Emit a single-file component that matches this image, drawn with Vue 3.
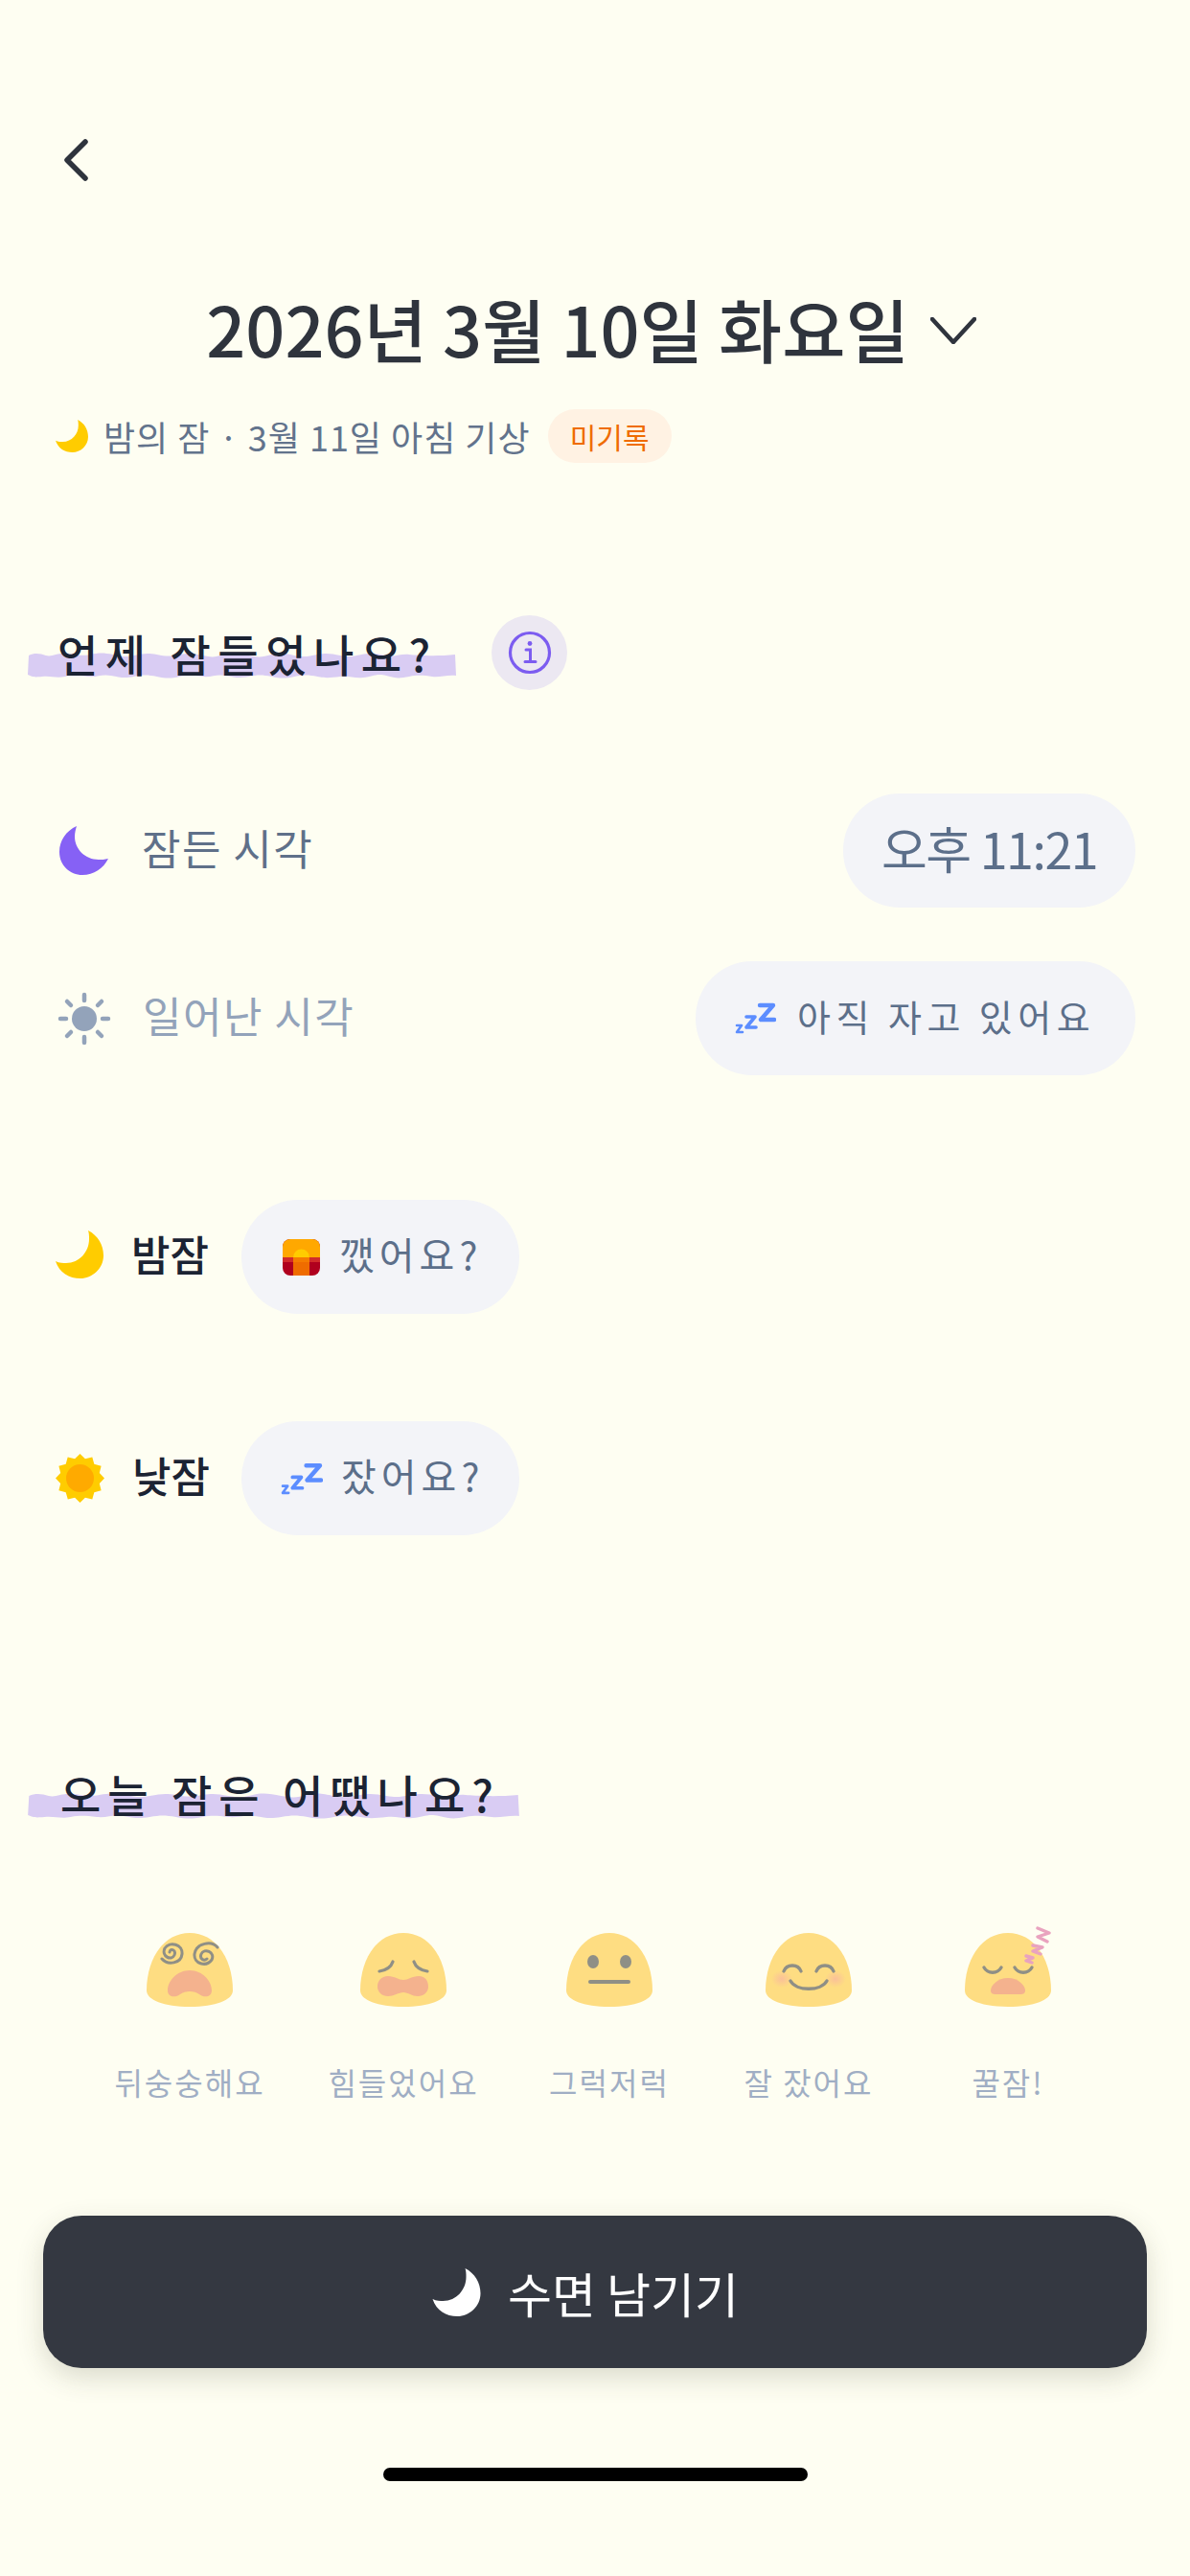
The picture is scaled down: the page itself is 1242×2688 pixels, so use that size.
<script setup>
const qualities = [
  { key: "dizzy", label: "뒤숭숭해요" },
  { key: "tired", label: "힘들었어요" },
  { key: "soso", label: "그럭저럭" },
  { key: "good", label: "잘 잤어요" },
  { key: "sweet", label: "꿀잠!" },
];

// 12 point sun outline
const sunPoints = Array.from({ length: 24 }, (_, i) => {
  const r = i % 2 === 0 ? 25.5 : 21;
  const a = (Math.PI / 12) * i - Math.PI / 2;
  return `${(25.5 + r * Math.cos(a)).toFixed(1)},${(25.5 + r * Math.sin(a)).toFixed(1)}`;
}).join(" ");

const wave = "M2 3C8 0 14 1 20 3S32 0 42 1S56 4 66 2S80 0 90 2S102 5 112 3S126 0 136 2S150 4 160 2S174 1 184 3S196 5 206 2S222 1 232 3S246 5 256 2S270 1 280 3S294 4 304 2S318 1 328 3S340 4 350 2S366 1 376 3S390 1 400 2S430 4 448 2L449 24C440 23 432 26 424 25S410 23 400 25S386 27 376 24S362 25 352 26S338 24 328 25S314 27 304 25S290 23 280 25S266 27 256 25S242 23 232 25S218 26 208 24S194 26 184 25S170 23 160 25S146 27 136 25S122 23 112 25S98 26 88 24S74 26 64 25S50 23 40 25S26 24 16 25S6 25 1 23Z";
</script>

<template>
  <div class="page">
    <div class="back">
      <svg width="30" height="44" viewBox="0 0 30 44" fill="none">
        <path d="M25 3L6 22L25 41" stroke="#2f343d" stroke-width="5.5" stroke-linecap="round" stroke-linejoin="round" />
      </svg>
    </div>

    <div class="date-row">
      <span class="date">2026년 3월 10일 화요일</span>
      <svg width="48" height="28" viewBox="0 0 48 28" fill="none">
        <path d="M2 2L24 26L46 2" stroke="#2f343d" stroke-width="4.5" stroke-linecap="round" stroke-linejoin="round" />
      </svg>
    </div>

    <div class="sub-row">
      <svg class="moon" width="34" height="34" viewBox="0 0 50 50">
        <path fill="#ffcc00" d="M34 0C44 5 50 15 50 26C50 40 38 50 26 50C14 50 4 44 0 32C4 34 8 34 11 34C25 34 35 22 35 9C35 6 35 3 34 0Z" />
      </svg>
      <span class="sub-text">밤의 잠 · 3월 11일 아침 기상</span>
      <span class="badge">미기록</span>
    </div>

    <div class="section-head">
      <div class="marker">
        <svg class="wave" viewBox="0 0 450 27" preserveAspectRatio="none">
          <path fill="#d9ccf3" :d="wave" />
        </svg>
        <span class="marker-text first">언제 잠들었나요?</span>
      </div>
      <div class="info">
        <svg width="46" height="46" viewBox="0 0 46 46" fill="none" stroke="#7c5cf0">
          <circle cx="23" cy="23" r="20.5" stroke-width="3.2" />
          <circle cx="23" cy="13.5" r="2.4" fill="#7c5cf0" stroke="none" />
          <path d="M19 20H23.5V32M18 32.5H29" stroke-width="3" stroke-linecap="round" />
        </svg>
      </div>
    </div>

    <div class="time-row first-row">
      <div class="time-label">
        <svg width="51" height="51" viewBox="0 0 51 51">
          <path fill="#8661f5" d="M18 0C7 5 0 15 0 27C0 41 11 51 24 51C36 51 46 44 51 34C47 35 44 35 41 35C27 35 16 24 16 11C16 7 17 3 18 0Z" />
        </svg>
        <span>잠든 시각</span>
      </div>
      <button class="pill time-pill"><span>오후 11:21</span></button>
    </div>

    <div class="time-row second-row">
      <div class="time-label muted">
        <svg width="56" height="56" viewBox="0 0 56 56" fill="none" stroke="#93a3ba" stroke-width="4.5" stroke-linecap="round">
          <circle cx="28" cy="28" r="13" fill="#93a3ba" stroke="none" />
          <path d="M28 3V9M28 47V53M3 28H9M47 28H53M10 10L14 14M46 10L42 14M10 46L14 42M46 46L42 42" />
        </svg>
        <span>일어난 시각</span>
      </div>
      <button class="pill still-pill">
        <svg class="zzz" width="43" height="33" viewBox="0 0 43 33" fill="none" stroke="#5c8dff" stroke-linecap="round" stroke-linejoin="round">
          <path d="M26 3H40L27 18H41" stroke-width="4.4" />
          <path d="M12 15H21L12 26H22" stroke-width="3.6" />
          <path d="M2 24H7L2 31H8" stroke-width="2.6" />
        </svg>
        <span>아직 자고 있어요</span>
      </button>
    </div>

    <div class="nap-row night-row">
      <div class="nap-label">
        <svg class="night-moon" width="50" height="50" viewBox="0 0 50 50">
          <path fill="#ffcc00" d="M34 0C44 5 50 15 50 26C50 40 38 50 26 50C14 50 4 44 0 32C4 34 8 34 11 34C25 34 35 22 35 9C35 6 35 3 34 0Z" />
        </svg>
        <span>밤잠</span>
      </div>
      <button class="pill nap-pill">
        <svg width="39" height="38" viewBox="0 0 39 38">
          <rect width="39" height="38" rx="8" fill="#b0001e" />
          <path d="M0 8a8 8 0 0 1 8-8H31a8 8 0 0 1 8 8V20H0Z" fill="#ffa800" />
          <rect y="19" width="39" height="5" fill="#d12a2a" />
          <path d="M11 38V20a8.500 8.500 0 0 1 17 0V38Z" fill="#ef6c00" />
          <path d="M11 19a8.500 8.500 0 0 1 17 0Z" fill="#ffcc00" />
          <rect x="11" y="19" width="17" height="5" fill="#f57c00" />
        </svg>
        <span>깼어요?</span>
      </button>
    </div>

    <div class="nap-row day-row">
      <div class="nap-label">
        <svg width="51" height="51" viewBox="0 0 51 51">
          <polygon :points="sunPoints" fill="#ffcc00" />
          <circle cx="25.500" cy="25.500" r="14.500" fill="#ffaa00" />
        </svg>
        <span>낮잠</span>
      </div>
      <button class="pill nap-pill">
        <svg class="zzz nap-zzz" width="44" height="36" viewBox="0 0 43 33" fill="none" stroke="#5c8dff" stroke-linecap="round" stroke-linejoin="round">
          <path d="M26 3H40L27 18H41" stroke-width="4.4" />
          <path d="M12 15H21L12 26H22" stroke-width="3.6" />
          <path d="M2 24H7L2 31H8" stroke-width="2.6" />
        </svg>
        <span>잤어요?</span>
      </button>
    </div>

    <div class="section-head second-head">
      <div class="marker wide">
        <svg class="wave" viewBox="0 0 450 27" preserveAspectRatio="none">
          <path fill="#d9ccf3" :d="wave" />
        </svg>
        <span class="marker-text second">오늘 잠은 어땠나요?</span>
      </div>
    </div>

    <div class="quality">
      <div v-for="q in qualities" :key="q.key" class="quality-item">
        <svg class="face" width="90" height="77" viewBox="0 0 90 77" fill="none">
          <defs v-if="q.key === 'good'">
            <radialGradient id="cheek">
              <stop offset="0" stop-color="#f9b7a0" stop-opacity="0.75" />
              <stop offset="1" stop-color="#f9b7a0" stop-opacity="0" />
            </radialGradient>
          </defs>
          <path fill="#fedd82" d="M45 0C73 0 90 28 90 60C90 70 72 77 45 77C18 77 0 70 0 60C0 28 17 0 45 0Z" />

          <g v-if="q.key === 'dizzy'" stroke="#8f8f86" stroke-width="3" stroke-linecap="round">
            <path d="M16 27C22 34 36 32 37 22C38 12 24 8 19 16C15 24 26 30 29 23C31 18 25 15 24 20" />
            <path d="M74 15C68 8 52 10 50 22C49 32 62 36 68 28C72 20 60 15 57 22C55 27 60 30 63 27" />
            <path stroke="none" fill="#f4b28e" d="M45 39C58 39 68 50 68 60C68 67 60 68 55 64C50 60 40 60 35 64C30 68 22 67 22 60C22 50 32 39 45 39Z" />
          </g>

          <g v-else-if="q.key === 'tired'" stroke="#8f8f86" stroke-width="3.2" stroke-linecap="round">
            <path d="M20 40C26 39 32 36 34 30M70 40C64 39 58 36 56 30" />
            <path stroke="none" fill="#f4b28e" d="M29 45C36 45 40 49 45 49C50 49 54 45 61 45C68 45 71 50 71 56C71 62 66 66 60 66C54 66 50 62 45 62C40 62 35 66 29 66C23 66 18 62 18 56C18 50 22 45 29 45Z" />
          </g>

          <g v-else-if="q.key === 'soso'">
            <ellipse cx="28" cy="30" rx="6" ry="7" fill="#8f8f86" />
            <ellipse cx="62" cy="30" rx="6" ry="7" fill="#8f8f86" />
            <path d="M25 51H65" stroke="#8f8f86" stroke-width="4" stroke-linecap="round" />
          </g>

          <g v-else-if="q.key === 'good'">
            <ellipse cx="17" cy="48" rx="11" ry="9" fill="url(#cheek)" />
            <ellipse cx="73" cy="48" rx="11" ry="9" fill="url(#cheek)" />
            <path d="M19 40C22 32 34 32 37 40M53 40C56 32 68 32 71 40M26 50C32 61 58 61 64 50" stroke="#8f8f86" stroke-width="3.4" stroke-linecap="round" />
          </g>

          <g v-else>
            <path d="M20 36C24 43 34 43 38 36M52 36C56 43 66 43 70 36" stroke="#8f8f86" stroke-width="3.4" stroke-linecap="round" />
            <path fill="#f4b28e" d="M45 47C56 47 63 55 63 60C63 63 61 64 58 64H32C29 64 27 63 27 60C27 55 34 47 45 47Z" />
            <path d="M76 -5L88 0L76 4L86 9M71 13L81 15L71 19L79 22M64 24L71 26L64 29L70 31" stroke="#e9a3bf" stroke-width="3.4" stroke-linejoin="round" stroke-linecap="round" />
          </g>
        </svg>
        <span class="quality-label">{{ q.label }}</span>
      </div>
    </div>

    <button class="save">
      <svg width="51" height="50" viewBox="0 0 50 50">
        <path fill="#ffffff" d="M34 0C44 5 50 15 50 26C50 40 38 50 26 50C14 50 4 44 0 32C4 34 8 34 11 34C25 34 35 22 35 9C35 6 35 3 34 0Z" />
      </svg>
      <span>수면 남기기</span>
    </button>

    <div class="home-bar"></div>
  </div>
</template>

<style scoped>
.page {
  width: 1242px;
  height: 2688px;
  overflow: hidden;
  box-sizing: border-box;
  padding-top: 145px;
  background: #fefef2;
  font-family: "Noto Sans CJK KR", "Noto Sans", sans-serif;
  display: flex;
  flex-direction: column;
}

.back {
  height: 44px;
  padding-left: 64px;
}

.back svg,
.date-row svg {
  display: block;
}

.date-row {
  margin-top: 116px;
  height: 80px;
  display: flex;
  align-items: center;
  justify-content: center;
  gap: 22px;
  padding-right: 8px;
}

.date {
  font-size: 72px;
  line-height: 80px;
  font-weight: 500;
  color: #2f343d;
  margin-bottom: 6px;
}

.sub-row {
  margin-top: 42px;
  height: 56px;
  padding-left: 58px;
  display: flex;
  align-items: center;
}

.sub-text {
  margin-left: 16px;
  font-size: 36px;
  line-height: 56px;
  color: #62738c;
  letter-spacing: 1px;
}

.badge {
  margin-left: 18px;
  width: 129px;
  height: 56px;
  border-radius: 28px;
  background: #fff2e3;
  color: #ef6c00;
  font-size: 30px;
  line-height: 56px;
  font-weight: 400;
  text-align: center;
}

.section-head {
  margin-top: 159px;
  height: 78px;
  padding-left: 28px;
  display: flex;
  align-items: flex-start;
}

.second-head {
  margin-top: 230px;
}

.marker {
  position: relative;
  width: 449px;
  height: 78px;
}

.marker.wide {
  width: 515px;
}

.wave {
  position: absolute;
  left: 0;
  top: 39px;
  width: 100%;
  height: 27px;
}

.marker-text {
  position: absolute;
  top: 6px;
  font-size: 46px;
  line-height: 66px;
  font-weight: 500;
  color: #1b2333;
  white-space: nowrap;
}

.marker-text.first {
  left: 32px;
  letter-spacing: 7.5px;
}

.marker-text.second {
  left: 35px;
  letter-spacing: 7px;
}

.info {
  margin-left: 36px;
  width: 79px;
  height: 78px;
  border-radius: 50%;
  background: #ece8f2;
  display: flex;
  align-items: center;
  justify-content: center;
}

.time-row {
  display: flex;
  align-items: center;
  justify-content: space-between;
  padding: 0 57px 0 60px;
}

.first-row {
  margin-top: 108px;
  padding-left: 62px;
}

.second-row {
  margin-top: 56px;
}

.time-label {
  display: flex;
  align-items: center;
  gap: 35px;
  font-size: 44px;
  color: #5f7089;
  letter-spacing: 1.5px;
}

.time-label.muted {
  gap: 33px;
  color: #93a3ba;
}

.time-label span,
.pill span {
  margin-bottom: 7px;
}

.pill {
  height: 119px;
  border: 0;
  border-radius: 59px;
  background: #f3f4f8;
  color: #5c6f8a;
  font-family: inherit;
  display: flex;
  align-items: center;
  padding: 0;
}

.time-pill {
  width: 305px;
  justify-content: center;
  font-size: 52px;
  letter-spacing: -1.5px;
}

.still-pill {
  width: 459px;
  padding-left: 41px;
  gap: 22px;
  font-size: 38px;
  letter-spacing: 5.5px;
  white-space: nowrap;
}

.nap-row {
  display: flex;
  align-items: center;
  padding-left: 58px;
}

.night-row {
  margin-top: 130px;
}

.day-row {
  margin-top: 112px;
}

.nap-label {
  width: 194px;
  display: flex;
  align-items: center;
  gap: 29px;
  font-size: 44px;
  font-weight: 500;
  color: #1b2333;
}

.nap-label span {
  margin-bottom: 8px;
}

.night-moon {
  margin-bottom: 5px;
}

.nap-pill {
  width: 290px;
  padding-left: 43px;
  gap: 20px;
  font-size: 40px;
  letter-spacing: 5px;
  white-space: nowrap;
}

.nap-zzz {
  margin-left: -2px;
  margin-right: -1px;
}

.quality {
  margin-top: 107px;
  padding-left: 86px;
  display: grid;
  grid-template-columns: 224px 222px 208px 208px 208px;
}

.quality-item {
  display: flex;
  flex-direction: column;
  align-items: center;
}

.face {
  overflow: visible;
  display: block;
}

.quality-label {
  margin-top: 58px;
  font-size: 32px;
  line-height: 40px;
  color: #a0aec4;
  letter-spacing: 2px;
  white-space: nowrap;
}

.save {
  margin: 120px 45px 0;
  height: 159px;
  border: 0;
  border-radius: 40px;
  background: #343841;
  box-shadow: 0 10px 28px rgba(60, 60, 40, 0.18);
  color: #fff;
  font-family: inherit;
  font-size: 50px;
  display: flex;
  align-items: center;
  justify-content: center;
  gap: 28px;
  padding: 0 20px 0 0;
}

.home-bar {
  margin: 104px 0 0 400px;
  width: 443px;
  height: 14px;
  border-radius: 7px;
  background: #000;
}
</style>
